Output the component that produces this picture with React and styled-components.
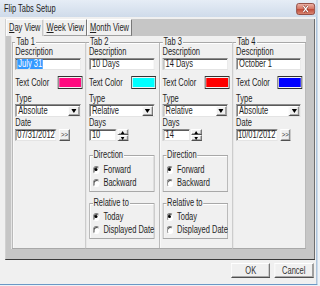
import React from 'react';
import styled, { createGlobalStyle, css } from 'styled-components';

const GlobalStyle = createGlobalStyle`
  html, body { margin: 0; padding: 0; width: 320px; height: 286px; overflow: hidden; background: #eef2f6; }
  #root { width: 320px; height: 286px; }
  *, *::before, *::after { box-sizing: border-box; }
`;

/* The dialog is laid out at 4/3 width and compressed horizontally, like the reference. */
const Stage = styled.div`
  width: 426.67px;
  height: 286px;
  transform: scaleX(0.75);
  transform-origin: 0 0;
  font-family: "Liberation Sans", Arial, sans-serif;
  font-size: 10px;
  color: #1e1e1e;
`;

const Window = styled.div`
  width: 422.67px;
  height: 285px;
  background: #f0f0f0;
  border-right: 1px solid #6a98c6;
  border-bottom: 1px solid #6a98c6;
  display: flex;
  flex-direction: column;
`;

const TitleBar = styled.div`
  height: 17px;
  flex: none;
  display: flex;
  justify-content: space-between;
  align-items: flex-start;
  padding: 0 1.5px 0 5.33px;
  background: linear-gradient(to bottom, #e6edf6, #cfdbea);
`;

const Title = styled.div`
  font-size: 10px;
  line-height: 12px;
  margin-top: 3px;
`;

const CloseButton = styled.div`
  width: 25px;
  height: 12px;
  margin-top: 3px;
  border: 1px solid #8a3b30;
  border-radius: 3px;
  background: linear-gradient(to bottom, #eab0a4 0%, #d77a68 45%, #c24f3c 55%, #d98470 100%);
  display: flex;
  align-items: center;
  justify-content: center;
`;

const TabControl = styled.div`
  margin: 2px 0 0 6.67px;
  width: 413.33px;
  height: 241px;
  flex: none;
  background: #c6c6c6;
  border-right: 1px solid #505050;
  border-bottom: 1px solid #3a3a3a;
  display: flex;
  flex-direction: column;
`;

const TabStrip = styled.div`
  height: 17px;
  flex: none;
  display: flex;
  align-items: flex-end;
  padding-left: 1.33px;
`;

const Tab = styled.div`
  height: 17px;
  padding: 0 3px;
  display: flex;
  align-items: center;
  background: #f0f0f0;
  border-top: 1px solid #ffffff;
  border-left: 1px solid #ffffff;
  border-right: 1px solid #505050;
  border-bottom: ${p => (p.$active ? 'none' : '1px solid #a0a0a0')};
  line-height: 12px;
  white-space: nowrap;
`;

const Key = styled.span`
  text-decoration: underline;
`;

const Page = styled.div`
  flex: 1;
  padding: 0 10.67px 10px 8px;
  display: flex;
`;

const Panel = styled.div`
  flex: 1;
  background: #f0f0f0;
  padding: 1px 0 0 1.33px;
  display: grid;
  grid-template-columns: repeat(4, 1fr);
  align-items: start;
`;

const GroupBox = styled.fieldset`
  margin: 0;
  min-width: 0;
  height: 212px;
  padding: 0 6px 0 3.5px;
  border: 1px solid #a8a8a8;
  border-right: ${p => (p.$last ? '1px solid #a8a8a8' : 'none')};
  box-shadow: inset 1px 1px 0 #ffffff;
`;

const Legend = styled.legend`
  font-size: 10px;
  line-height: 10px;
  padding: 0 1.5px;
  background: #f0f0f0;
`;

const Column = styled.div`
  display: flex;
  flex-direction: column;
`;

const FieldLabel = styled.div`
  line-height: 11px;
  height: 11px;
  margin-top: ${p => p.$mt || 0}px;
  white-space: nowrap;
`;

const sunken = css`
  background: #ffffff;
  border: 1px solid;
  border-color: #8c8c8c #e4e4e4 #e4e4e4 #8c8c8c;
  box-shadow: inset 1px 1px 0 #5a5a5a;
`;

const raised = css`
  background: #f0f0f0;
  border: 1px solid;
  border-color: #ffffff #505050 #505050 #ffffff;
  box-shadow: inset -1px -1px 0 #a8a8a8;
`;

const TextBox = styled.div`
  ${sunken};
  height: 12px;
  width: ${p => p.$w || '100%'};
  margin-top: ${p => p.$mt || 0}px;
  padding-left: ${p => p.$pl || 3}px;
  line-height: 10px;
  white-space: nowrap;
  overflow: hidden;
  display: flex;
  align-items: center;
  flex: none;
`;

const Selected = styled.span`
  background: #3399ff;
  color: #ffffff;
  padding: 0 1px;
  margin-left: -1px;
`;

const ColorRow = styled.div`
  height: 13px;
  margin-top: 6px;
  display: flex;
  align-items: center;
  justify-content: space-between;
`;

const Swatch = styled.div`
  width: 33px;
  height: 13px;
  margin-right: -1.5px;
  border: 1px solid #333333;
  padding: 1px;
  background: #f4f4f4;
  display: flex;
`;

const SwatchFill = styled.span`
  flex: 1;
  background: ${p => p.$color};
`;

const Select = styled.div`
  ${sunken};
  height: 13px;
  display: flex;
  align-items: stretch;
  padding: 1px 1px 0 2px;
`;

const SelectText = styled.span`
  flex: 1;
  line-height: 10px;
  align-self: center;
  padding-left: 1px;
`;

const DropButton = styled.span`
  ${raised};
  width: 14.67px;
  display: flex;
  align-items: center;
  justify-content: center;
`;

const InputRow = styled.div`
  display: flex;
  align-items: center;
  gap: ${p => p.$gap || 4}px;
  margin-top: 1px;
  height: 12px;
`;

const SmallButton = styled.div`
  ${raised};
  width: 13.33px;
  height: 12px;
  font-size: 8px;
  line-height: 10px;
  text-align: center;
  color: #333;
`;

const Spinner = styled.div`
  width: 13.33px;
  height: 12px;
  display: flex;
  flex-direction: column;
`;

const SpinHalf = styled.div`
  ${raised};
  flex: 1;
  display: flex;
  align-items: center;
  justify-content: center;
`;

const SubGroup = styled.fieldset`
  margin: ${p => p.$mt || 0}px 0 0 0;
  min-width: 0;
  padding: 0 0 2px 4px;
  border: 1px solid #a8a8a8;
  box-shadow: inset 1px 1px 0 #ffffff;
`;

const SubLegend = styled.legend`
  font-size: 10px;
  line-height: 10px;
  padding: 0 1px;
  background: #f0f0f0;
`;

const RadioRow = styled.div`
  height: 13px;
  display: flex;
  align-items: center;
  gap: 5px;
  margin-top: ${p => p.$mt || 0}px;
  white-space: nowrap;
`;

const Radio = styled.span`
  flex: none;
  width: 9.33px;
  height: 8px;
  border-radius: 50%;
  background: #ffffff;
  border: 1px solid;
  border-color: #808080 #ffffff #ffffff #808080;
  box-shadow: inset 1px 1px 0 #505050;
  position: relative;
  ${p =>
    p.$checked &&
    css`
      &::after {
        content: '';
        position: absolute;
        left: 50%;
        top: 50%;
        width: 4px;
        height: 3px;
        margin: -1.5px 0 0 -2px;
        border-radius: 50%;
        background: #000;
      }
    `}
`;

const ButtonBar = styled.div`
  flex: 1;
  display: flex;
  justify-content: flex-end;
  align-items: flex-start;
  padding: 3px 4px 0 0;
  gap: 5.33px;
`;

const DialogButton = styled.div`
  ${raised};
  width: 52px;
  height: 15px;
  line-height: 13px;
  text-align: center;
  color: #333;
`;

const Triangle = ({ down = true, w = 7, h = 4 }) => (
  <svg width={w} height={h} viewBox="0 0 7 4">
    {down ? <path d="M0 0 H7 L3.5 4 Z" fill="#000" /> : <path d="M0 4 H7 L3.5 0 Z" fill="#000" />}
  </svg>
);

const tabs = [
  { title: 'Tab 1', desc: 'July 31', selected: true, color: '#ff0a80', type: 'Absolute', date: '07/31/2012' },
  { title: 'Tab 2', desc: '10 Days', color: '#00ffff', type: 'Relative', days: '10' },
  { title: 'Tab 3', desc: '14 Days', color: '#ff0000', type: 'Relative', days: '14' },
  { title: 'Tab 4', desc: 'October 1', color: '#0000ff', type: 'Absolute', date: '10/01/2012' },
];

function TabGroup({ t, last }) {
  return (
    <GroupBox $last={last}>
      <Legend>{t.title}</Legend>
      <Column>
        <FieldLabel $mt={-1}>Description</FieldLabel>
        <TextBox $mt={1}>{t.selected ? <Selected>{t.desc}</Selected> : t.desc}</TextBox>
        <ColorRow>
          <span>Text Color</span>
          <Swatch>
            <SwatchFill $color={t.color} />
          </Swatch>
        </ColorRow>
        <FieldLabel $mt={4}>Type</FieldLabel>
        <Select>
          <SelectText>{t.type}</SelectText>
          <DropButton>
            <Triangle />
          </DropButton>
        </Select>
        {t.date ? (
          <>
            <FieldLabel>Date</FieldLabel>
            <InputRow $gap={4}>
              <TextBox $w="55px" $pl={1.5}>{t.date}</TextBox>
              <SmallButton>&gt;&gt;</SmallButton>
            </InputRow>
          </>
        ) : (
          <>
            <FieldLabel>Days</FieldLabel>
            <InputRow $gap={2.67}>
              <TextBox $w="36px">{t.days}</TextBox>
              <Spinner>
                <SpinHalf>
                  <Triangle down={false} w={5} h={3} />
                </SpinHalf>
                <SpinHalf>
                  <Triangle w={5} h={3} />
                </SpinHalf>
              </Spinner>
            </InputRow>
            <SubGroup $mt={9}>
              <SubLegend>Direction</SubLegend>
              <RadioRow $mt={3}>
                <Radio $checked />
                Forward
              </RadioRow>
              <RadioRow>
                <Radio />
                Backward
              </RadioRow>
            </SubGroup>
            <SubGroup $mt={6}>
              <SubLegend>Relative to</SubLegend>
              <RadioRow $mt={2}>
                <Radio $checked />
                Today
              </RadioRow>
              <RadioRow>
                <Radio />
                Displayed Date
              </RadioRow>
            </SubGroup>
          </>
        )}
      </Column>
    </GroupBox>
  );
}

export default function App() {
  return (
    <>
      <GlobalStyle />
      <Stage>
        <Window>
          <TitleBar>
            <Title>Flip Tabs Setup</Title>
            <CloseButton>
              <svg width="11" height="8" viewBox="0 0 11 8">
                <path d="M2.5 1 L8.5 7 M8.5 1 L2.5 7" stroke="#7a2a20" strokeWidth="2.6" />
                <path d="M2.5 1 L8.5 7 M8.5 1 L2.5 7" stroke="#ffffff" strokeWidth="1.6" />
              </svg>
            </CloseButton>
          </TitleBar>
          <TabControl>
            <TabStrip>
              <Tab $active>
                <Key>D</Key>ay View
              </Tab>
              <Tab>
                <Key>W</Key>eek View
              </Tab>
              <Tab>
                <Key>M</Key>onth View
              </Tab>
            </TabStrip>
            <Page>
              <Panel>
                {tabs.map((t, i) => (
                  <TabGroup key={t.title} t={t} last={i === tabs.length - 1} />
                ))}
              </Panel>
            </Page>
          </TabControl>
          <ButtonBar>
            <DialogButton>OK</DialogButton>
            <DialogButton>Cancel</DialogButton>
          </ButtonBar>
        </Window>
      </Stage>
    </>
  );
}
